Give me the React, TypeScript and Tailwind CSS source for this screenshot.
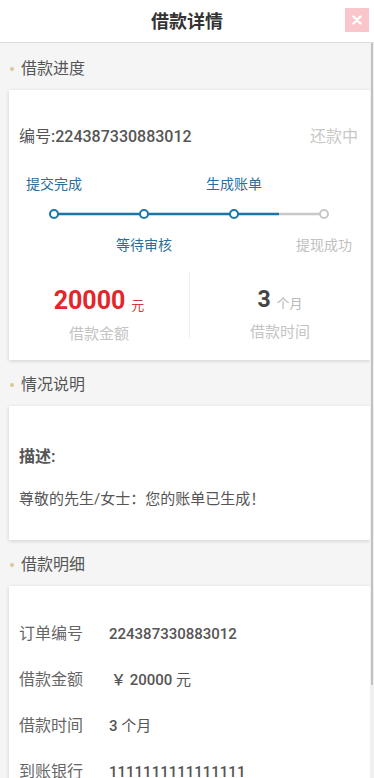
import React from "react";

const FONT = { fontFamily: "Roboto, 'Noto Sans CJK SC', sans-serif" };

function SectionTitle({ title, first }: { title: string; first?: boolean }) {
  return (
    <div className={(first ? "h-[47px]" : "h-[46px]") + " flex items-center pt-[4px] pl-[1px]"}>
      <span className="w-[4px] h-[4px] rounded-full bg-[#dcc795] mr-[7px]" />
      <span className="text-[16px] text-[#555] leading-none">{title}</span>
    </div>
  );
}

function Progress() {
  return (
    <svg width="361" height="16" viewBox="0 0 361 16" className="block">
      <line x1="45" y1="8" x2="270" y2="8" stroke="#1b76a8" strokeWidth="2.5" />
      <line x1="270" y1="8" x2="315" y2="8" stroke="#c8c8c8" strokeWidth="2.5" />
      <circle cx="45" cy="8" r="4" fill="#fff" stroke="#1b76a8" strokeWidth="2" />
      <circle cx="135" cy="8" r="4" fill="#fff" stroke="#1b76a8" strokeWidth="2" />
      <circle cx="225" cy="8" r="4" fill="#fff" stroke="#1b76a8" strokeWidth="2" />
      <circle cx="315" cy="8" r="4" fill="#fff" stroke="#c8c8c8" strokeWidth="2" />
    </svg>
  );
}

export default function App() {
  const rows: [string, React.ReactNode][] = [
    ["订单编号", <span>224387330883012</span>],
    [
      "借款金额",
      <span>
        <span className="ml-[2px]">￥</span> 20000 <span className="font-normal">元</span>
      </span>,
    ],
    ["借款时间", <span>3 <span className="font-normal">个月</span></span>],
    ["到账银行", <span>1111111111111111</span>],
  ];
  return (
    <div className="relative h-[778px] w-full overflow-hidden bg-[#f5f5f5]" style={FONT}>
      {/* header */}
      <div className="relative h-[43px] bg-white border-b border-[#dcdcdc] flex items-center justify-center">
        <span className="text-[18px] font-bold text-[#333]">借款详情</span>
        <div className="absolute left-[345px] top-[8px] w-[24px] h-[24px] bg-[#f9c7cb] flex items-center justify-center">
          <svg width="10" height="10" viewBox="0 0 10 10">
            <path d="M1.5 1.5 L8.5 8.5 M8.5 1.5 L1.5 8.5" stroke="#fff" strokeWidth="2.4" strokeLinecap="round" />
          </svg>
        </div>
      </div>

      <div className="pl-[9px] pr-[4px]">
        <SectionTitle title="借款进度" first />
        {/* card 1 */}
        <div className="bg-white shadow-[0_1px_4px_rgba(0,0,0,0.15)] h-[270px] flex flex-col">
          <div className="flex items-center justify-between pl-[10px] pr-[12px] mt-[37px] h-[20px]">
            <span className="text-[16px] text-[#555] font-medium">
              <span className="font-normal">编号</span>:224387330883012
            </span>
            <span className="text-[16px] text-[#c8c8c8]">还款中</span>
          </div>
          <div className="grid grid-cols-4 w-[360px] mt-[28px] h-[18px] text-[14px] text-[#2a6f9c] leading-[18px]">
            <span className="text-center">提交完成</span>
            <span />
            <span className="text-center">生成账单</span>
            <span />
          </div>
          <div className="mt-[13px]">
            <Progress />
          </div>
          <div className="grid grid-cols-4 w-[360px] mt-[14px] h-[18px] text-[14px] leading-[18px]">
            <span />
            <span className="text-center text-[#2a6f9c]">等待审核</span>
            <span />
            <span className="text-center text-[#c0c0c0]">提现成功</span>
          </div>
          <div className="flex mt-[18px] h-[66px]">
            <div className="flex-1 flex flex-col items-center">
              <div className="h-[30px] flex items-end mt-[16px]">
                <span className="text-[25px] font-bold text-[#e2262b] leading-none">20000</span>
                <span className="text-[13px] text-[#d03a3a] ml-[6px] leading-none mb-[1px]">元</span>
              </div>
              <span className="text-[15px] text-[#c4c4c4] mt-[14px] leading-none">借款金额</span>
            </div>
            <div className="w-px bg-[#eeeeee]" />
            <div className="flex-1 flex flex-col items-center">
              <div className="h-[26px] flex items-end mt-[16px]">
                <span className="text-[23px] font-bold text-[#444] leading-none">3</span>
                <span className="text-[13px] text-[#b8b8b8] ml-[6px] leading-none mb-[1px]">个月</span>
              </div>
              <span className="text-[15px] text-[#c4c4c4] mt-[14px] leading-none">借款时间</span>
            </div>
          </div>
        </div>

        <SectionTitle title="情况说明" />
        {/* card 2 */}
        <div className="bg-white shadow-[0_1px_4px_rgba(0,0,0,0.15)] h-[134px] pl-[10px] flex flex-col">
          <span className="mt-[41px] text-[16px] font-bold text-[#555] leading-[20px]">描述:</span>
          <span className="mt-[22px] text-[15px] text-[#555] leading-[20px]">尊敬的先生/女士：您的账单已生成！</span>
        </div>

        <SectionTitle title="借款明细" />
        {/* card 3 */}
        <div className="bg-white shadow-[0_1px_4px_rgba(0,0,0,0.15)] pl-[10px] pt-[25px] pb-[20px]">
          {rows.map(([k, v]) => (
            <div key={k} className="flex items-center h-[46px]">
              <span className="w-[90px] text-[16px] text-[#666]">{k}</span>
              <span className="text-[15px] font-medium text-[#555]">{v}</span>
            </div>
          ))}
        </div>
      </div>

      {/* scrollbar overlay */}
      <div className="absolute top-[43px] right-0 bottom-0 w-[4px] bg-[#f0f0f0]">
        <div className="ml-[1px] w-[2px] h-[642px] bg-[#c2c2c2]" />
      </div>
    </div>
  );
}
